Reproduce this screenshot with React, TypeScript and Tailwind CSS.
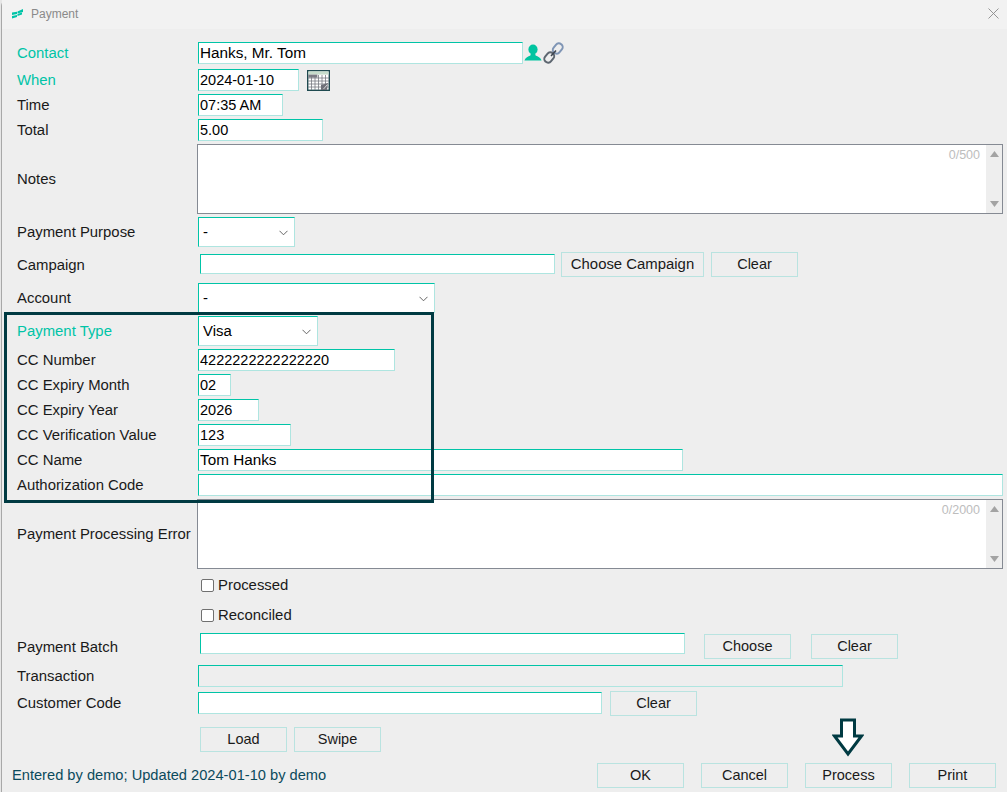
import type { ReactNode } from 'react'

const inputBorder = 'border border-t-[#00c4a7] border-l-[#00c4a7] border-r-[#aee5e0] border-b-[#aee5e0]'

function Row({ label, accent, top, height, children }: {
    label?: string
    accent?: boolean
    top: number
    height: number
    children: ReactNode
}) {
    return (
        <div className="flex items-center" style={{ marginTop: top, height }}>
            <span className={`w-[181px] shrink-0 ${accent ? 'text-[#00c4a7]' : 'text-[#1a1a1a]'}`}>{label}</span>
            <div className="flex items-center h-full">{children}</div>
        </div>
    )
}

function Field({ value = '', className = '' }: { value?: string; className?: string }) {
    return (
        <input
            readOnly
            value={value}
            className={`h-[22px] px-[1px] bg-white text-black text-[14.5px] outline-none ${inputBorder} ${className}`}
        />
    )
}

function Dropdown({ value, className }: { value: string; className: string }) {
    return (
        <div className={`relative h-[30px] ${className}`}>
            <select
                value={value}
                onChange={() => {}}
                className={`appearance-none w-full h-full pl-[4px] bg-white text-black outline-none ${inputBorder}`}
            >
                <option>{value}</option>
            </select>
            <svg className="absolute right-[7px] top-[13px] w-[9px] h-[6px]" viewBox="0 0 9 6" fill="none" stroke="#555" strokeWidth="0.9">
                <path d="M0.5 0.8 L4.5 4.8 L8.5 0.8" />
            </svg>
        </div>
    )
}

function Btn({ children, className = '' }: { children: ReactNode; className?: string }) {
    return (
        <button
            type="button"
            className={`w-[87px] h-[25px] shrink-0 pb-[2px] bg-[#eeeeee] border border-[#b9e3e0] text-[#1a1a1a] text-[14.5px] ${className}`}
        >
            {children}
        </button>
    )
}

function MemoBox({ count }: { count: string }) {
    return (
        <div className="relative flex w-[806px] h-[70px] -ml-[1px] bg-white border border-[#858a93]">
            <textarea readOnly className="flex-1 resize-none outline-none bg-white" />
            <span className="absolute right-[22px] top-[1px] text-[12.5px] text-[#bdbdbd]">{count}</span>
            <div className="w-[16px] bg-[#eeeeee] flex flex-col justify-between items-center py-[6px]">
                <svg className="w-[9px] h-[6px]" viewBox="0 0 9 6"><path d="M4.5 0 L9 6 L0 6 Z" fill="#a3a3a3" /></svg>
                <svg className="w-[9px] h-[6px]" viewBox="0 0 9 6"><path d="M0 0 L9 0 L4.5 6 Z" fill="#a3a3a3" /></svg>
            </div>
        </div>
    )
}

function Check({ label, top }: { label: string; top: number }) {
    return (
        <div className="flex items-center pl-[184px] h-[20px]" style={{ marginTop: top }}>
            <span className="w-[13px] h-[13px] bg-white border border-[#707070] rounded-[2px] mr-[4px]" />
            <span className="text-[#1a1a1a]">{label}</span>
        </div>
    )
}

function LogoIcon() {
    return (
        <svg className="w-[12px] h-[10px] mr-[7px]" viewBox="0 0 12 10" fill="#00c4a7">
            <path d="M5.500 2.500 L11 0 V3 L5.500 4.500 Z" />
            <path d="M0 3.500 L5 2.800 V5 L0 6 Z" />
            <path d="M0 7 L5 6 V8 L0 9.500 Z" />
            <path d="M5.500 5 L10 3.500 V5.500 L5.500 7 Z" />
        </svg>
    )
}

function PersonIcon() {
    return (
        <svg className="w-[18px] h-[18px] ml-[1px]" viewBox="0 0 18 18" fill="#00c4a0">
            <ellipse cx="9" cy="5.500" rx="4.600" ry="5" />
            <path d="M6.800 9.500 H11.200 L11.600 11.600 C14 12.400 16.400 13.600 17.600 16.500 H0.400 C1.600 13.600 4 12.400 6.400 11.600 Z" />
        </svg>
    )
}

function LinkIcon() {
    return (
        <svg className="w-[21px] h-[22px] ml-[1px] mb-[1px]" viewBox="0 0 21 22" fill="none">
            <rect x="11" y="1" width="7.500" height="11" rx="3.600" transform="rotate(40 14.750 6.500)" stroke="#7f95b5" strokeWidth="2" />
            <rect x="2.500" y="10" width="7.500" height="11" rx="3.600" transform="rotate(40 6.250 15.500)" stroke="#5d6670" strokeWidth="2" />
            <path d="M8 14 L13 8.500" stroke="#3f4650" strokeWidth="1.600" />
        </svg>
    )
}

function CalendarIcon() {
    return (
        <svg className="w-[23px] h-[21px]" viewBox="0 0 23 21">
            <rect x="0.700" y="0.700" width="21.600" height="19.600" fill="#ffffff" stroke="#1f4a50" strokeWidth="1.400" />
            <rect x="1.400" y="1.400" width="20.200" height="3.200" fill="#c6dccb" />
            <rect x="1.400" y="4.600" width="9" height="3" fill="#7d7d86" />
            <path d="M1 8 H22 M1 11 H22 M1 14 H22 M1 17 H22 M4.500 5 V20 M8 5 V20 M11.500 5 V20 M15 5 V20 M18.500 5 V20" stroke="#777a80" strokeWidth="0.800" />
            <path d="M14 20 L14 15 L21 13 L20 20 Z" fill="#6f7078" />
            <path d="M16.500 19 L20.500 14.500" stroke="#d8d8d8" strokeWidth="1" />
        </svg>
    )
}

export default function App() {
    return (
        <div className="relative w-[1007px] h-[792px] overflow-hidden bg-[#e6e6e6] text-[14.9px] leading-[18px] font-[Liberation_Sans,sans-serif]">
            <div className="ml-[1px] h-full flex flex-col bg-[#eeeeee] border-l border-[#a8a8a8] rounded-tl-[6px]">
                {/* title bar */}
                <div className="h-[29px] shrink-0 flex items-center pl-[10px] pr-[8px] pb-[2px] bg-[#f2f2f2]">
                    <LogoIcon />
                    <span className="text-[12px] text-[#8a8a8a]">Payment</span>
                    <svg className="ml-auto w-[11px] h-[11px]" viewBox="0 0 11 11" stroke="#8a8a8a" strokeWidth="0.900">
                        <path d="M0.500 0.500 L10.500 10.500 M10.500 0.500 L0.500 10.500" />
                    </svg>
                </div>

                <div className="pl-[15px] flex flex-col">
                    <Row label="Contact" accent top={13} height={22}>
                        <Field value="Hanks, Mr. Tom" className="w-[325px] !text-[15.3px]" />
                        <PersonIcon />
                        <LinkIcon />
                    </Row>
                    <Row label="When" accent top={5} height={22}>
                        <Field value="2024-01-10" className="w-[101px]" />
                        <span className="ml-[8px]"><CalendarIcon /></span>
                    </Row>
                    <Row label="Time" top={3} height={22}>
                        <Field value="07:35 AM" className="w-[85px]" />
                    </Row>
                    <Row label="Total" top={3} height={22}>
                        <Field value="5.00" className="w-[125px]" />
                    </Row>
                    <Row label="Notes" top={3} height={70}>
                        <MemoBox count="0/500" />
                    </Row>
                    <Row label="Payment Purpose" top={3} height={30}>
                        <Dropdown value="-" className="w-[97px]" />
                    </Row>
                    <Row label="Campaign" top={5} height={25}>
                        <Field className="w-[355px] ml-[2px] !h-[20px] self-start mt-[2px]" />
                        <Btn className="ml-[6px] !w-[143px] !text-[14.9px]">Choose Campaign</Btn>
                        <Btn className="ml-[7px]">Clear</Btn>
                    </Row>
                    <Row label="Account" top={6} height={30}>
                        <Dropdown value="-" className="w-[237px]" />
                    </Row>
                    <Row label="Payment Type" accent top={3} height={30}>
                        <Dropdown value="Visa" className="w-[120px]" />
                    </Row>
                    <Row label="CC Number" top={3} height={22}>
                        <Field value="4222222222222220" className="w-[197px]" />
                    </Row>
                    <Row label="CC Expiry Month" top={3} height={22}>
                        <Field value="02" className="w-[33px]" />
                    </Row>
                    <Row label="CC Expiry Year" top={3} height={22}>
                        <Field value="2026" className="w-[61px]" />
                    </Row>
                    <Row label="CC Verification Value" top={3} height={22}>
                        <Field value="123" className="w-[93px]" />
                    </Row>
                    <Row label="CC Name" top={3} height={22}>
                        <Field value="Tom Hanks" className="w-[485px] !text-[15.3px]" />
                    </Row>
                    <Row label="Authorization Code" top={3} height={22}>
                        <Field className="w-[805px]" />
                    </Row>
                    <Row label="Payment Processing Error" top={3} height={70}>
                        <MemoBox count="0/2000" />
                    </Row>
                    <Check label="Processed" top={6} />
                    <Check label="Reconciled" top={10} />
                    <Row label="Payment Batch" top={9} height={25}>
                        <Field className="w-[485px] ml-[2px] !h-[21px] self-start -mt-[1px]" />
                        <Btn className="ml-[19px]">Choose</Btn>
                        <Btn className="ml-[20px]">Clear</Btn>
                    </Row>
                    <Row label="Transaction" top={6} height={22}>
                        <Field className="w-[645px] !bg-[#eeeeee]" />
                    </Row>
                    <Row label="Customer Code" top={3} height={25}>
                        <Field className="w-[404px]" />
                        <Btn className="ml-[8px] mt-[2px]">Clear</Btn>
                    </Row>
                    <Row top={12} height={25}>
                        <Btn className="ml-[2px]">Load</Btn>
                        <Btn className="ml-[7px]">Swipe</Btn>
                    </Row>
                </div>

                {/* footer */}
                <div className="flex items-center h-[25px] mt-[11px] pl-[10px] pr-[11px]">
                    <span className="text-[14.65px] text-[#0b4a5c] pb-[2px]">Entered by demo; Updated 2024-01-10 by demo</span>
                    <div className="ml-auto flex">
                        <Btn>OK</Btn>
                        <Btn className="ml-[17px]">Cancel</Btn>
                        <Btn className="ml-[17px]">Process</Btn>
                        <Btn className="ml-[17px]">Print</Btn>
                    </div>
                </div>
            </div>

            {/* callout annotations drawn over the dialog */}
            <div className="absolute left-[4px] top-[312px] w-[430px] h-[191px] border-[3px] border-[#003a42] pointer-events-none" />
            <svg className="absolute left-[832px] top-[718px] w-[32px] h-[39px]" viewBox="0 0 32 39">
                <path d="M9.500 2 H22.500 V18 H29.500 L16 36 L2.500 18 H9.500 Z" fill="#ffffff" stroke="#003a42" strokeWidth="3" />
            </svg>
        </div>
    )
}
